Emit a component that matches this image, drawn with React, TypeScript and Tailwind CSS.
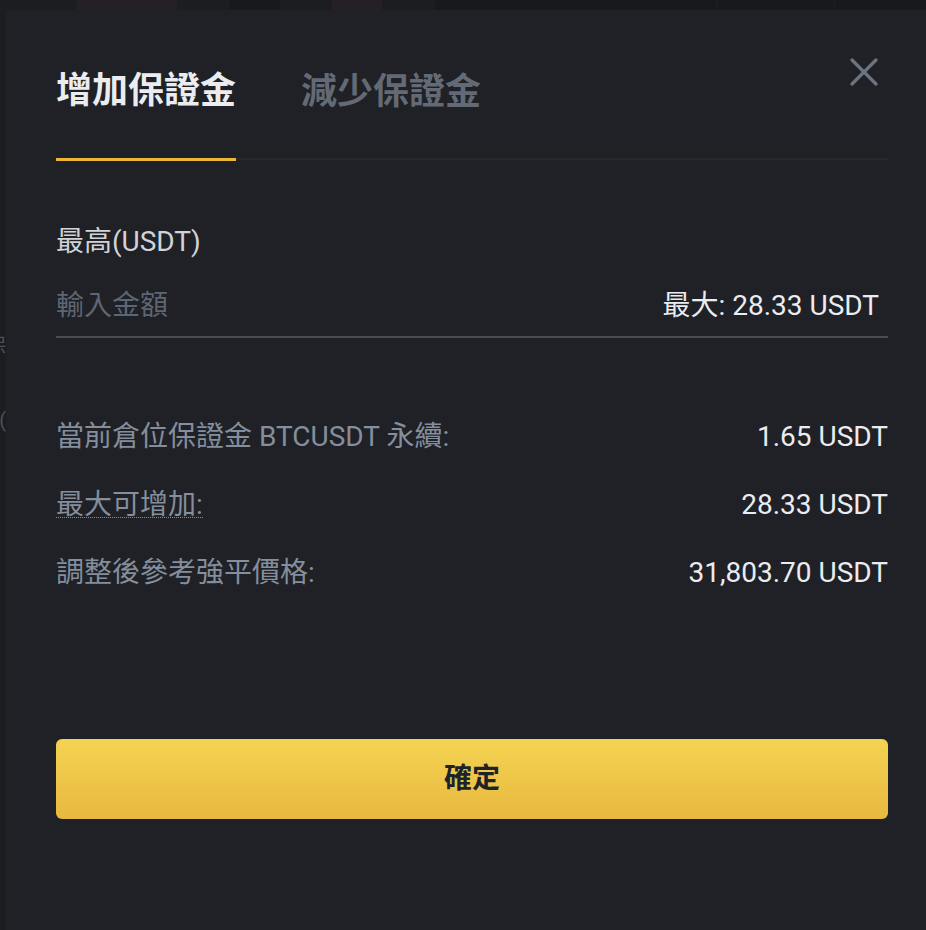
import React, { useState } from 'react';

const rows = [
  { label: '當前倉位保證金 BTCUSDT 永續:', value: '1.65 USDT', dotted: false },
  { label: '最大可增加:', value: '28.33 USDT', dotted: true },
  { label: '調整後參考強平價格:', value: '31,803.70 USDT', dotted: false },
];

function CloseIcon() {
  return (
    <svg width="28" height="28" viewBox="0 0 28 28" fill="none">
      <path d="M2 2L26 26M26 2L2 26" stroke="#6d7381" strokeWidth="3.2" strokeLinecap="round" />
    </svg>
  );
}

export default function App() {
  const [tab, setTab] = useState<'add' | 'remove'>('add');
  const [amount, setAmount] = useState('');

  return (
    <div
      className="w-[926px] h-[930px] overflow-hidden bg-[#1b1d21] flex flex-col"
      style={{ fontFamily: 'Roboto, "Noto Sans CJK TC", sans-serif' }}
    >
      {/* page behind the modal */}
      <div className="h-[10px] flex shrink-0">
        <div className="w-[77px]" />
        <div className="w-[100px] bg-[#261f25]" />
        <div className="w-[53px]" />
        <div className="w-[50px] bg-[#17191d]" />
        <div className="w-[52px]" />
        <div className="w-[50px] bg-[#261f25]" />
        <div className="w-[53px]" />
        <div className="w-[281px] bg-[#17191d]" />
        <div className="w-[2px]" />
        <div className="w-[116px] bg-[#17191d]" />
        <div className="w-[1px]" />
        <div className="flex-1 bg-[#17191d]" />
      </div>

      <div className="flex flex-1 min-h-0">
        <div className="w-[6px] shrink-0 overflow-hidden flex flex-col text-[20px] text-[#4b5059] leading-none">
          <div className="h-[326px]" />
          <div className="flex justify-end whitespace-nowrap">保</div>
          <div className="h-[54px]" />
          <div className="flex justify-end whitespace-nowrap">(</div>
        </div>

        {/* modal */}
        <div className="flex-1 bg-[#1f2126] pl-[50px] pr-[38px] pt-[59px] flex flex-col">
          <div className="relative flex items-end">
            <button
              onClick={() => setTab('add')}
              className={`text-[36px] leading-[44px] font-bold pb-[45px] border-b-[3px] ${
                tab === 'add' ? 'text-[#eaecef] border-[#eab93a]' : 'text-[#646a75] border-[#2a2629]'
              }`}
            >
              增加保證金
            </button>
            <div className="flex-1 flex items-end border-b-2 border-[#2a2629] mb-[1px]">
              <button
                onClick={() => setTab('remove')}
                className={`ml-[65px] text-[36px] leading-[44px] font-bold pb-[44px] ${
                  tab === 'remove' ? 'text-[#eaecef]' : 'text-[#646a75]'
                }`}
              >
                減少保證金
              </button>
            </div>
            <button className="absolute right-[10px] top-[-11px]">
              <CloseIcon />
            </button>
          </div>

          <div className="mt-[63px] text-[28px] leading-[36px] text-[#d0d3d8]">最高(USDT)</div>

          <div className="mt-[24px] flex items-center border-b-2 border-[#474d57] pb-[8px] pr-[9px]">
            <input
              value={amount}
              onChange={(e) => setAmount(e.target.value)}
              placeholder="輸入金額"
              className="flex-1 bg-transparent outline-none text-[28px] leading-[44px] h-[44px] text-[#eaecef] placeholder:text-[#5e6673]"
            />
            <span className="text-[28px] leading-[44px] text-[#eaecef]">最大: 28.33 USDT</span>
          </div>

          <div className="mt-[81px] flex flex-col gap-[32px]">
            {rows.map((row) => (
              <div key={row.label} className="flex items-center justify-between h-[36px] text-[28px]">
                {row.dotted ? (
                  <span className="inline-block leading-[24px] text-[#848e9c] border-b border-dotted border-[#848e9c]">
                    {row.label}
                  </span>
                ) : (
                  <span className="leading-[36px] text-[#848e9c]">{row.label}</span>
                )}
                <span className="leading-[36px] text-[#eaecef]">{row.value}</span>
              </div>
            ))}
          </div>

          <button className="mt-[148px] h-[80px] rounded-[6px] bg-gradient-to-b from-[#f5d352] to-[#e7b83f] text-[28px] font-bold text-[#1e2329]">
            確定
          </button>
        </div>
      </div>
    </div>
  );
}
